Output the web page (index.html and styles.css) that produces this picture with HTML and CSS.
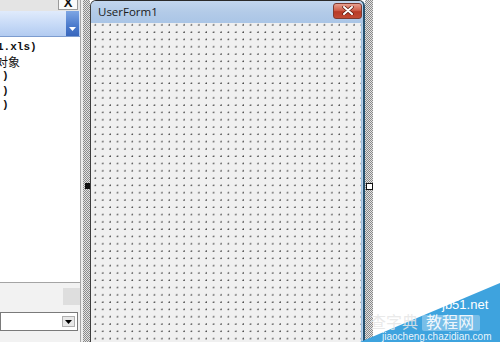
FILE: index.html
```html
<!DOCTYPE html>
<html>
<head>
<meta charset="utf-8">
<link rel="stylesheet" href="styles.css">
</head>
<body>
<div class="stage">
  <aside class="left">
    <div class="left-main">
      <div class="top-strip"><span class="xbox">X</span></div>
      <div class="blue-bar"><span class="drop"><svg width="9" height="6" viewBox="0 0 9 6"><path d="M1 1h7L4.5 5z" fill="#fff"/></svg></span></div>
      <div class="list">
        <div class="ln mono cut">1.xls)</div>
        <div class="ln cjk cut2">对象</div>
        <div class="ln mono">)</div>
        <div class="ln mono">)</div>
        <div class="ln mono">)</div>
      </div>
      <div class="bottom">
        <div class="tool-row"><span class="sq"></span></div>
        <div class="combo"><span class="combo-btn"><svg width="7" height="4" viewBox="0 0 7 4"><path d="M0 0h7L3.5 4z" fill="#000"/></svg></span></div>
      </div>
    </div>
    <div class="gap"></div>
  </aside>
  <div class="hatch hatch-l"><span class="handle-black"></span></div>
  <section class="form">
    <div class="title">
      <span class="title-text">UserForm1</span>
      <span class="close"><svg width="12" height="9" viewBox="0 0 12 9"><path d="M2 1l8 7M10 1L2 8" stroke="#5a1a10" stroke-width="3.4" stroke-linecap="round"/><path d="M2 1l8 7M10 1L2 8" stroke="#fff" stroke-width="2" stroke-linecap="round"/></svg></span>
    </div>
    <div class="canvas"></div>
  </section>
  <div class="hatch hatch-r"><span class="handle-white"></span></div>
  <div class="rest"></div>
  <svg class="watermark" width="140" height="62" viewBox="0 0 140 62">
    <polygon points="0,62 140,3 140,62" fill="#3ea3de"/>
    <rect x="62" y="35" width="58" height="16" rx="2" fill="#ffffff" fill-opacity="0.3"/>
    <text x="82" y="29" font-family="Liberation Sans, sans-serif" font-size="13" fill="#ffffff">jb51.net</text>
    <text x="10" y="48" font-family="Noto Sans CJK SC, sans-serif" font-size="16" fill="#e6e6e6" fill-opacity="0.85">查字典</text>
    <text x="66" y="48" font-family="Noto Sans CJK SC, sans-serif" font-size="16" fill="#ffffff" fill-opacity="0.9">教程网</text>
    <text x="22" y="60" font-family="Liberation Sans, sans-serif" font-size="10" fill="#ffffff" fill-opacity="0.9">jiaocheng.chazidian.com</text>
  </svg>
</div>
</body>
</html>
```

FILE: styles.css
```css
html, body {
  margin: 0;
  padding: 0;
  background: #ffffff;
}
.stage {
  position: relative;
  width: 500px;
  height: 342px;
  display: flex;
  overflow: hidden;
  background: #ffffff;
}
.left {
  width: 83px;
  display: flex;
  flex-shrink: 0;
}
.left-main {
  width: 80px;
  display: flex;
  flex-direction: column;
  border-right: 1px solid #a6a6a6;
  overflow: hidden;
}
.gap {
  width: 2px;
  background: #ececec;
}
.top-strip {
  height: 11px;
  background: #e4e4e4;
  display: flex;
  justify-content: flex-end;
  align-items: flex-start;
}
.xbox {
  width: 18px;
  height: 10px;
  margin-right: 2px;
  margin-top: -1px;
  background: #fafafa;
  border: 1px solid #9a9a9a;
  border-top: none;
  font-family: "Liberation Sans", sans-serif;
  font-weight: bold;
  font-size: 13px;
  line-height: 8px;
  text-align: center;
  color: #111;
  overflow: hidden;
}
.blue-bar {
  height: 25px;
  background: linear-gradient(#e0ebfc, #c4d8f6 60%, #b2cbf1);
  border-bottom: 1px solid #7c9ccf;
  display: flex;
  justify-content: flex-end;
}
.drop {
  width: 13px;
  margin-right: 1px;
  background: linear-gradient(#7ea6e4, #4a7acc 60%, #3866bc);
  display: flex;
  align-items: flex-end;
  justify-content: center;
  padding-bottom: 4px;
  box-sizing: border-box;
}
.list {
  flex: 1;
  background: #ffffff;
  padding-top: 3px;
}
.ln {
  height: 14.5px;
  line-height: 14.5px;
  color: #111;
  white-space: nowrap;
}
.mono {
  font-family: "Liberation Mono", monospace;
  font-weight: bold;
  font-size: 11px;
  padding-left: 2px;
}
.cut {
  margin-left: -5px;
}
.cjk {
  font-family: "Noto Sans CJK SC", sans-serif;
  font-size: 12px;
}
.cut2 {
  margin-left: -4px;
}
.bottom {
  height: 59px;
  border-top: 1px solid #a4a4a4;
  background: #f2f2f2;
  display: flex;
  flex-direction: column;
}
.tool-row {
  height: 29px;
  display: flex;
  justify-content: flex-end;
  align-items: flex-start;
  padding-top: 5px;
  box-sizing: border-box;
}
.sq {
  width: 17px;
  height: 17px;
  background: #dedede;
}
.combo {
  height: 19px;
  width: 78px;
  background: #ffffff;
  border: 1px solid #7a7a7a;
  box-sizing: border-box;
  display: flex;
  justify-content: flex-end;
  align-items: center;
  padding-right: 2px;
}
.combo-btn {
  width: 13px;
  height: 11px;
  background: #e8e8e8;
  border: 1px solid #b0b0b0;
  box-sizing: border-box;
  display: flex;
  align-items: center;
  justify-content: center;
}
.hatch {
  position: relative;
  flex-shrink: 0;
  background: repeating-conic-gradient(#8a8a8a 0 25%, #e2e2e2 0 50%) 0 0 / 2px 2px;
}
.hatch-l {
  width: 7px;
}
.hatch-r {
  width: 8px;
}
.handle-black {
  position: absolute;
  left: 2px;
  top: 183px;
  width: 5px;
  height: 6px;
  background: #111;
}
.handle-white {
  position: absolute;
  left: 1px;
  top: 183px;
  width: 5px;
  height: 5px;
  background: #fff;
  border: 1px solid #111;
}
.form {
  width: 275px;
  flex-shrink: 0;
  display: flex;
  flex-direction: column;
  border-left: 1px solid #3e3e3e;
  border-right: 2px solid #24506e;
  border-top: 1px solid #2a2a2a;
  border-radius: 6px 6px 0 0;
  box-sizing: border-box;
  overflow: hidden;
  background: #b8d0ea;
}
.title {
  height: 22px;
  background: linear-gradient(#c2d6ee, #b3cbe8 50%, #aac5e6);
  display: flex;
  align-items: center;
  justify-content: space-between;
  padding: 0 1px 0 7px;
}
.title-text {
  font-family: "Open Sans", "Noto Sans", sans-serif;
  font-size: 11.5px;
  color: #1a1a1a;
  padding-bottom: 2px;
}
.close {
  width: 29px;
  height: 16px;
  margin-top: -3px;
  border: 1px solid #7e3a30;
  border-radius: 3px;
  box-sizing: border-box;
  background: linear-gradient(#e8a090, #d0604c 45%, #b83a26 55%, #c24a34);
  display: flex;
  align-items: center;
  justify-content: center;
}
.canvas {
  flex: 1;
  margin: 0 1px 0 0;
  border-right: 1px solid #9cc0e4;
  background-color: #f0f0f0;
  background-image: radial-gradient(circle at 1px 1px, #4a4a4a 0.6px, transparent 0.8px);
  background-size: 7.4px 7.3px;
  background-position: 3.3px 0.8px;
}
.rest {
  flex: 1;
  background: #ffffff;
}
.watermark {
  position: absolute;
  right: 0;
  bottom: 0;
}
```
